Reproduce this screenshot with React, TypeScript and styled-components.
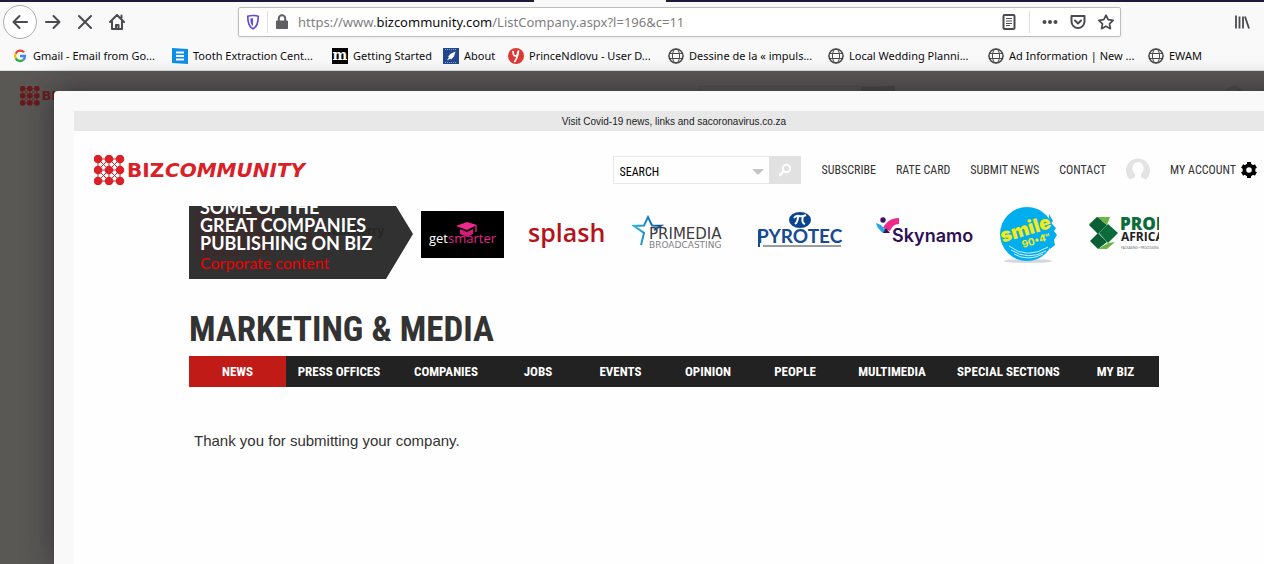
import React from "react";
import styled, { createGlobalStyle } from "styled-components";

const GlobalStyle = createGlobalStyle`
  *, *::before, *::after { box-sizing: border-box; }
  body { margin: 0; background: #595855; color: #333; }
  button { border: 0; padding: 0; background: none; font: inherit; color: inherit; cursor: pointer; }
  a { color: inherit; text-decoration: none; }
  svg { display: block; flex: none; }
`;

const uiFont = `"Noto Sans", "Open Sans", sans-serif`;
const condensed = `"Roboto Condensed", Roboto, sans-serif`;

const Screen = styled.div`
  display: flex;
  flex-direction: column;
  min-height: 100vh;
  overflow: hidden;
`;

/* Browser chrome */

const Chrome = styled.header`
  background: #f9f9fa;
  border-bottom: 1px solid #dcdcdc;
  font-family: ${uiFont};
`;

const TabStrip = styled.div`
  display: flex;
  height: 2px;
  background: #1c1b3c;
`;

const ActiveTab = styled.div`
  width: 132px;
  margin-left: 534px;
  background: #f9f9fa;
`;

const ToolBar = styled.div`
  display: flex;
  align-items: center;
  height: 40px;
  padding: 0 14px 0 3px;
`;

const ToolButton = styled.button<{ $round?: boolean }>`
  display: grid;
  place-items: center;
  flex: none;
  width: ${(p) => (p.$round ? 34 : 32)}px;
  height: ${(p) => (p.$round ? 34 : 32)}px;
  border-radius: 50%;
  border: ${(p) => (p.$round ? "1px solid #acacac" : "0")};
  background: ${(p) => (p.$round ? "#fff" : "none")};
`;

const AddressBar = styled.form`
  display: flex;
  align-items: center;
  flex: 1;
  height: 30px;
  margin: 0 113px 0 105px;
  padding: 0 6px;
  background: #fff;
  border: 1px solid #bdbdbd;
  border-radius: 2px;
  box-shadow: 0 1px 3px rgba(0, 0, 0, 0.06);
`;

const Divider = styled.span<{ $gap: number }>`
  width: 1px;
  height: 22px;
  margin: 0 ${(p) => p.$gap}px;
  background: #dedede;
`;

const Address = styled.a`
  flex: 1;
  margin-left: 8px;
  font-size: 13px;
  line-height: 20px;
  color: #808080;
  white-space: nowrap;
  b { font-weight: 400; color: #0c0c0d; }
`;

const AddressActions = styled.div`
  display: flex;
  align-items: center;
  gap: 12px;
`;

const Bookmarks = styled.nav`
  display: flex;
  align-items: center;
  height: 28px;
  padding-left: 12px;
`;

const Bookmark = styled.a<{ $width: number }>`
  display: flex;
  align-items: center;
  gap: 5px;
  flex: none;
  width: ${(p) => p.$width}px;
  font-size: 11px;
  line-height: 16px;
  color: #0c0c0d;
  white-space: nowrap;
`;

/* Dimmed page and the panel over it */

const Stage = styled.div`
  position: relative;
  display: flex;
  flex: 1;
  padding: 20px 0 0 54px;
  background: #595855;
`;

const DimmedHeader = styled.div`
  position: absolute;
  inset: 15px 20px auto 20px;
  display: flex;
  align-items: flex-start;
`;

const DimmedSearch = styled.div`
  width: 196px;
  height: 28px;
  margin: 0 329px 0 auto;
  border: 1px solid #504f4c;
  border-right: 34px solid #4b4a48;
`;

const DimmedAvatar = styled.div`
  width: 20px;
  height: 20px;
  border: 3px solid #504f4c;
  border-radius: 50%;
`;

const Panel = styled.section`
  position: relative;
  flex: 1;
  margin-right: -30px;
  padding: 20px 20px 0;
  background: #f9f9f9;
  border-radius: 4px 0 0 0;
  box-shadow: 0 0 30px rgba(30, 25, 35, 0.65);
`;

const Page = styled.div`
  min-height: 100%;
  background: #fefefe;
`;

const Notice = styled.a`
  display: block;
  height: 20px;
  background: #e8e8e8;
  text-align: center;
  font: 10px/21px "Liberation Sans", Arial, sans-serif;
  color: #222;
`;

const SiteHeader = styled.header`
  display: flex;
  align-items: center;
  gap: 20px;
  height: 75px;
  padding: 2px 17px 0 20px;
  font: 12px/20px ${condensed};
  color: #333;
`;

const LogoLink = styled.a`
  margin-right: auto;
`;

const SearchForm = styled.form`
  display: flex;
  height: 28px;
`;

const SearchBox = styled.label`
  display: flex;
  align-items: center;
  width: 156px;
  padding: 4px 5px 0;
  border: 1px solid #e8e8e8;
  border-right: 0;
`;

const SearchInput = styled.input`
  flex: 1;
  min-width: 0;
  padding: 0;
  border: 0;
  outline: 0;
  background: none;
  font: 12px/20px ${condensed};
  color: #000;
`;

const SearchButton = styled.button`
  display: grid;
  place-items: center;
  width: 32px;
  background: #e1e1e1;
`;

const Account = styled.a`
  display: flex;
  align-items: center;
  gap: 5px;
`;

const Container = styled.main`
  max-width: 970px;
  margin: 0 auto;
`;

const Companies = styled.section`
  display: flex;
  height: 73px;
  overflow: hidden;
`;

const CompaniesTitle = styled.div`
  position: relative;
  display: flex;
  flex-direction: column;
  justify-content: flex-end;
  flex: none;
  width: 224px;
  padding: 0 0 6px 11px;
  background: #313131;
  clip-path: polygon(0 0, 207px 0, 224px 28px, 197px 73px, 0 73px);
  font-family: Lato, sans-serif;
`;

const HiddenLogos = styled.svg`
  position: absolute;
  left: 0;
  top: 0;
`;

const BannerHeading = styled.h2`
  position: relative;
  margin: 0;
  font-size: 18px;
  line-height: 18px;
  font-weight: 700;
  color: #fff;
  white-space: nowrap;
`;

const BannerNote = styled.p`
  position: relative;
  margin: 0;
  font-size: 16px;
  line-height: 21px;
  color: #f00000;
`;

const LogoStrip = styled.div`
  display: flex;
  gap: 24px;
  flex: 1;
  min-width: 0;
  margin-left: 8px;
  overflow: hidden;
`;

const Heading = styled.h1`
  margin: 30px 0 5px;
  font: 700 35px/42px ${condensed};
  color: #333;
`;

const MainNav = styled.nav`
  display: grid;
  grid-template-columns: 97fr 106fr 108fr 76fr 89fr 86fr 88fr 106fr 127fr 87fr;
  background: #222;
`;

const MainNavLink = styled.a<{ $active?: boolean }>`
  background: ${(p) => (p.$active ? "#c01b17" : "none")};
  color: #fff;
  text-align: center;
  font: 700 13px/31px ${condensed};
  white-space: nowrap;
`;

const Message = styled.p`
  margin: 44px 5px;
  font: 15px/20px "Liberation Sans", Arial, sans-serif;
  color: #333;
`;

const ink = "#4a4a4f";

const Icon = ({ size = 16, children }: { size?: number; children: React.ReactNode }) => (
  <svg width={size} height={size} viewBox="0 0 16 16" fill="none" stroke={ink} strokeWidth="2" strokeLinecap="round" strokeLinejoin="round" aria-hidden="true">
    {children}
  </svg>
);

const Globe = () => (
  <svg width="16" height="16" viewBox="0 0 16 16" fill="none" stroke="#4a4a4a" aria-hidden="true">
    <circle cx="8" cy="8" r="7" strokeWidth="1.6" />
    <ellipse cx="8" cy="8" rx="3.6" ry="7" strokeWidth="1" />
    <path d="M1.5 5.500h13M1.5 10.500h13" strokeWidth="1" />
  </svg>
);

const GoogleMark = () => (
  <svg width="16" height="16" viewBox="0 0 16 16" fill="none" strokeWidth="2.3" aria-hidden="true">
    <path d="M12 4.2A5 5 0 0 0 3.7 5.6" stroke="#ea4335" />
    <path d="M3.7 5.6a5 5 0 0 0 0 4.8" stroke="#fbbc05" />
    <path d="M3.7 10.4a5 5 0 0 0 7.6 1.4" stroke="#34a853" />
    <path d="M11.3 11.8A5 5 0 0 0 13 8H8" stroke="#4285f4" />
  </svg>
);

const ListMark = () => (
  <svg width="16" height="16" viewBox="0 0 16 16" aria-hidden="true">
    <path d="M0 0l16 1v15L0 15z" fill="#0d8fe8" />
    <path d="M4 4.5h8M4 8h8M4 11.5h8" stroke="#fff" strokeWidth="2" />
  </svg>
);

const LetterM = () => (
  <svg width="16" height="16" viewBox="0 0 16 16" aria-hidden="true">
    <path d="M0 0h16v16H0z" />
    <text x="8" y="12" textAnchor="middle" fontFamily="DejaVu Serif, serif" fontWeight="700" fontSize="14" fill="#fff">m</text>
  </svg>
);

const RocketMark = () => (
  <svg width="16" height="16" viewBox="0 0 16 16" aria-hidden="true">
    <path d="M0 0h16v16H0z" fill="#23478c" />
    <path d="M12.500 3.500L8 5.500 5 8.500l1 .500-2 3.500 3.500-2 .500 1L11 8.500z" fill="#fff" />
    <path d="M2 1.500h12M2 14.500h12" stroke="#8aa2cf" strokeDasharray="1 1" />
  </svg>
);

const RedYMark = () => (
  <svg width="16" height="16" viewBox="0 0 16 16" aria-hidden="true">
    <circle cx="8" cy="8" r="8" fill="#dc3a35" />
    <path d="M5 3.500c.2 3 .8 4.500 2.200 4.500 1.700 0 2.600-2 3-4.700M10.500 3C10 7 9 10.500 6.800 13.500" fill="none" stroke="#fff" strokeWidth="1.700" strokeLinecap="round" />
  </svg>
);

const bookmarks: { label: string; width: number; icon: React.ReactNode }[] = [
  { label: "Gmail - Email from Go...", width: 160, icon: <GoogleMark /> },
  { label: "Tooth Extraction Cent...", width: 160, icon: <ListMark /> },
  { label: "Getting Started", width: 111, icon: <LetterM /> },
  { label: "About", width: 65, icon: <RocketMark /> },
  { label: "PrinceNdlovu - User D...", width: 160, icon: <RedYMark /> },
  { label: "Dessine de la « impuls...", width: 160, icon: <Globe /> },
  { label: "Local Wedding Planni...", width: 160, icon: <Globe /> },
  { label: "Ad Information | New ...", width: 160, icon: <Globe /> },
  { label: "EWAM", width: 64, icon: <Globe /> },
];

const navItems = ["NEWS", "PRESS OFFICES", "COMPANIES", "JOBS", "EVENTS", "OPINION", "PEOPLE", "MULTIMEDIA", "SPECIAL SECTIONS", "MY BIZ"];

const dots = [4, 15, 26];

const BizLogo = ({ color, scale = 1, short }: { color: string; scale?: number; short?: boolean }) => (
  <svg width={216 * scale} height={30 * scale} viewBox="0 0 216 30" fill={color} role="img" aria-label="Bizcommunity">
    <path d="M4 4h22v22H4zM4 15h22M15 4v22M4 4l22 22M26 4L4 26M15 4L4 15l11 11 11-11z" fill="none" stroke={color} />
    {dots.map((y) => dots.map((x) => <circle key={`${x}-${y}`} cx={x} cy={y} r="4.300" />))}
    <text x="33" y="22" fontFamily="DejaVu Sans, sans-serif" fontSize="20" fontWeight="700">{short ? "BI" : "BIZ"}</text>
    {!short && (
      <text x="71" y="22" fontFamily="DejaVu Sans, sans-serif" fontSize="20" fontStyle="italic" fontWeight="700">COMMUNITY</text>
    )}
  </svg>
);

const GetSmarter = () => (
  <svg width="83" height="73" role="img" aria-label="getsmarter">
    <path d="M0 5h83v47H0z" />
    <path d="M35 20l11-4 10 3-10 5z" fill="#f0288c" />
    <path d="M39 23l7 3 6-3v5l-6 3-7-3z" fill="#d41b79" />
    <path d="M55 19v7" stroke="#d41b79" strokeWidth="1.500" />
    <text x="8" y="37" fontFamily="Open Sans, sans-serif" fontWeight="400" fontSize="13" fill="#fff">get<tspan fill="#e5258a">smarter</tspan></text>
  </svg>
);

const Splash = () => (
  <svg width="80" height="73" role="img" aria-label="splash">
    <text x="0" y="36" fontFamily="Open Sans, sans-serif" fontWeight="600" fontSize="25" fill="#b5121b">splash</text>
  </svg>
);

const Primedia = () => (
  <svg width="96" height="73" role="img" aria-label="Primedia Broadcasting">
    <defs>
      <linearGradient id="star" x1="0" x2="1">
        <stop offset="0" stopColor="#26b5e8" />
        <stop offset="1" stopColor="#12508e" />
      </linearGradient>
    </defs>
    <path d="M9 39l3-12-10-7 10-.500L16 11l4 8.500 9 .200-7 4.500" fill="none" stroke="url(#star)" strokeWidth="2" />
    <text x="17" y="33" fontFamily="DejaVu Sans, sans-serif" fontSize="15" fill="#3c3c40">PRIMEDIA</text>
    <text x="17" y="42" fontFamily="DejaVu Sans, sans-serif" fontSize="9" fill="#808085">BROADCASTING</text>
  </svg>
);

const Pyrotec = () => (
  <svg width="96" height="73" role="img" aria-label="Pyrotec">
    <ellipse cx="48" cy="14" rx="11" ry="8" fill="#0b4590" />
    <path d="M42 12q2-3 5-2t7-1M46 10q0 6-3 8M51 10q-2 7 2 8" fill="none" stroke="#fff" strokeWidth="2" />
    <text x="5" y="37" fontFamily="Lato, sans-serif" fontWeight="700" fontSize="19" fill="#164a93">PYROTEC</text>
    <path d="M7 24v17" stroke="#164a93" strokeWidth="2" />
    <path d="M11 40h78" stroke="#9b9ca0" strokeWidth="2" />
  </svg>
);

const Skynamo = () => (
  <svg width="104" height="73" role="img" aria-label="Skynamo">
    <path d="M11 22c3-6 8-10 16-10v6c-5 0-7 3-9 7z" fill="#f0288c" />
    <path d="M4 17c4 1 7 3 8 6l2-2 1 5-4 1c-3-3-6-5-7-10z" fill="#26a9e0" />
    <circle cx="11" cy="14" r="2.700" fill="#3a1060" />
    <path d="M11 27l3-5 4 5z" fill="#3a1060" />
    <text x="20" y="36" fontFamily="Inter, sans-serif" fontWeight="600" fontSize="18" fill="#2f0e56">Skynamo</text>
  </svg>
);

const Smile = () => (
  <svg width="60" height="73" role="img" aria-label="smile 90.4 FM">
    <ellipse cx="28" cy="55" rx="24" ry="2" fill="#d5d5df" />
    <circle cx="27" cy="28" r="27" fill="#00aeef" />
    <path d="M49 8l4 7-2 2 5 5-2 3 3 4-3 5 1 5-5 4z" fill="#00aeef" />
    <path d="M9 40q18 14 39 1M11 44q17 11 35 1M14 48q14 8 29 0" fill="none" stroke="#d2f0fc" />
    <g transform="rotate(-17 28 28)">
      <text x="1" y="29" fontFamily="Inter, sans-serif" fontWeight="900" fontSize="19" fill="#f5ea14">smile</text>
      <text x="19" y="40" fontFamily="Inter, sans-serif" fontWeight="700" fontSize="10" fill="#f5ea14">90•4</text>
      <text x="42" y="36" fontFamily="Inter, sans-serif" fontWeight="700" fontSize="4" fill="#f5ea14">FM</text>
    </g>
  </svg>
);

const Propak = () => (
  <svg width="110" height="73" role="img" aria-label="Propak Africa">
    <path d="M5 18l8-7h9l-9 10z" fill="#6cb544" />
    <path d="M13 11l10 8-9 9-9-9z" fill="#0a5e36" />
    <path d="M24 18l10 9-10 10-9-10z" fill="#0a6b3b" />
    <path d="M14 27l9 9-9 7-8-8z" fill="#0a5e36" />
    <path d="M22 11h4l-3 8-5-4zM24 37l-10 6h9l8-7z" fill="#6cb544" />
    <text x="36" y="24" fontFamily="Open Sans, sans-serif" fontWeight="800" fontSize="17" fill="#0a6b3b">PROPAK</text>
    <text x="37" y="35" fontFamily="Open Sans, sans-serif" fontWeight="700" fontSize="12" fill="#222">AFRICA</text>
    <text x="37" y="43" fontFamily="Open Sans, sans-serif" fontSize="3" fill="#555">PACKAGING • PROCESSING</text>
  </svg>
);

export default function App() {
  return (
    <Screen>
      <GlobalStyle />
      <Chrome>
        <TabStrip><ActiveTab /></TabStrip>
        <ToolBar>
          <ToolButton $round aria-label="Back"><Icon><path d="M15 8H1.500M7.500 2L1.500 8l6 6" /></Icon></ToolButton>
          <ToolButton aria-label="Forward"><Icon><path d="M1 8h13.500M8.500 2l6 6-6 6" /></Icon></ToolButton>
          <ToolButton aria-label="Stop"><Icon><path d="M2 2l12 12M14 2L2 14" /></Icon></ToolButton>
          <ToolButton aria-label="Home"><Icon><path d="M1 8l7-7 7 7M3 7.500V15h10V7.500M12.500 1.500V4" /><path d="M7 15v-4h2.500v4" /></Icon></ToolButton>
          <AddressBar>
            <svg width="16" height="16" viewBox="0 0 16 16" fill="none" aria-hidden="true">
              <path d="M8 1.500c2 0 3.800.300 5.200.8C13.300 8 12.500 12.500 8 14.800 3.500 12.500 2.700 8 2.800 2.300 4.200 1.800 6 1.500 8 1.500z" stroke="#6549dc" strokeWidth="1.700" />
              <path d="M8 4.200v8C5.800 10.500 5.300 8 5.400 4.500z" fill="#5a50e0" />
            </svg>
            <Divider $gap={6} />
            <svg width="16" height="16" viewBox="0 0 16 16" aria-hidden="true">
              <path d="M2.500 7h11v7.500h-11z" fill="#5f5f63" stroke="#5f5f63" strokeLinejoin="round" />
              <path d="M4.800 7V4.500a3.200 3.200 0 0 1 6.400 0V7" fill="none" stroke="#5f5f63" strokeWidth="2" />
            </svg>
            <Address href="#">https://www.<b>bizcommunity.com</b>/ListCompany.aspx?l=196&amp;c=11</Address>
            <AddressActions>
              <button type="button" aria-label="Reader view">
                <Icon><rect x="2.500" y="1" width="11" height="14" rx="1" /><path d="M5.500 4.500h5M5.500 7h5M5.500 9.500h5M5.500 11.500h3" strokeWidth="1" /></Icon>
              </button>
              <Divider $gap={0} />
              <button type="button" aria-label="Page actions">
                <svg width="16" height="16" fill={ink}><circle cx="2.500" cy="8" r="2" /><circle cx="8" cy="8" r="2" /><circle cx="13.500" cy="8" r="2" /></svg>
              </button>
              <button type="button" aria-label="Save to Pocket">
                <Icon><path d="M1.500 2h13v5.500a6.500 6.500 0 0 1-13 0z" /><path d="M5 6.500l3 3 3-3" /></Icon>
              </button>
              <button type="button" aria-label="Bookmark">
                <Icon><path d="M8 1.200l2.200 4.500 4.900.700-3.600 3.400.900 4.900L8 12.300l-4.400 2.400.900-4.900L.900 6.400l4.900-.700z" strokeWidth="1.700" /></Icon>
              </button>
            </AddressActions>
          </AddressBar>
          <button type="button" aria-label="Library">
            <svg width="16" height="16" stroke={ink} strokeWidth="1.800" fill="none"><path d="M2 1.500v13M5.500 2.500v12M9 2.500v12M11 2.500l4 12" /></svg>
          </button>
        </ToolBar>
        <Bookmarks>
          {bookmarks.map((b) => (
            <Bookmark key={b.label} href="#" $width={b.width}>{b.icon}{b.label}</Bookmark>
          ))}
        </Bookmarks>
      </Chrome>
      <Stage>
        <DimmedHeader>
          <BizLogo color="#6b1a1c" scale={0.65} short />
          <DimmedSearch />
          <DimmedAvatar />
        </DimmedHeader>
        <Panel>
          <Page>
            <Notice href="#">Visit Covid-19 news, links and sacoronavirus.co.za</Notice>
            <SiteHeader>
              <LogoLink href="#"><BizLogo color="#da2128" /></LogoLink>
              <SearchForm>
                <SearchBox>
                  <SearchInput aria-label="Search" defaultValue="SEARCH" />
                  <svg width="12" height="6" aria-hidden="true"><path d="M0 0h12L6 6z" fill="#c4c4c4" /></svg>
                </SearchBox>
                <SearchButton type="button" aria-label="Search">
                  <svg width="14" height="14" fill="none" stroke="#fff" strokeWidth="2" strokeLinecap="round"><circle cx="8.500" cy="5.500" r="3.700" /><path d="M5.500 8.500L2 12" strokeWidth="2.500" /></svg>
                </SearchButton>
              </SearchForm>
              <a href="#">SUBSCRIBE</a>
              <a href="#">RATE CARD</a>
              <a href="#">SUBMIT NEWS</a>
              <a href="#">CONTACT</a>
              <svg width="24" height="24" aria-hidden="true">
                <path d="M4 21.500A12 12 0 1 1 20 21.500L15 19v-3c5-5 2-12-3-12S4 11 9 16v3z" fill="#e3e3e3" />
              </svg>
              <Account href="#">
                MY ACCOUNT
                <svg width="16" height="16" viewBox="0 0 16 16" aria-hidden="true">
                  <circle cx="8" cy="8" r="4.600" fill="none" stroke="#000" strokeWidth="3.600" />
                  <path d="M6 0h4v3H6zM6 13h4v3H6zM.100 5.700l2-3.500 2.600 1.500-2 3.500zM11.300 12.300l2-3.500 2.600 1.500-2 3.500zM2.100 13.800l-2-3.500 2.600-1.500 2 3.500zM13.300 7.200l-2-3.500 2.600-1.500 2 3.500z" />
                </svg>
              </Account>
            </SiteHeader>
            <Container>
              <Companies>
                <CompaniesTitle>
                  <HiddenLogos width="224" height="73" aria-hidden="true">
                    <path d="M6 4h45v47H6zM51 4h32v46H67l-7-8-8 8z" fill="#3a2b2d" />
                    <circle cx="127" cy="25" r="9" fill="none" stroke="#432526" strokeWidth="3" />
                    <text x="138" y="29" fontFamily="Open Sans, sans-serif" fontWeight="600" fontSize="12" fill="#242424">redcherry</text>
                  </HiddenLogos>
                  <BannerHeading>SOME OF THE<br />GREAT COMPANIES<br />PUBLISHING ON BIZ</BannerHeading>
                  <BannerNote>Corporate content</BannerNote>
                </CompaniesTitle>
                <LogoStrip>
                  <GetSmarter />
                  <Splash />
                  <Primedia />
                  <Pyrotec />
                  <Skynamo />
                  <Smile />
                  <Propak />
                </LogoStrip>
              </Companies>
              <Heading>MARKETING &amp; MEDIA</Heading>
              <MainNav>
                {navItems.map((item, i) => (
                  <MainNavLink key={item} href="#" $active={i === 0}>{item}</MainNavLink>
                ))}
              </MainNav>
              <Message>Thank you for submitting your company.</Message>
            </Container>
          </Page>
        </Panel>
      </Stage>
    </Screen>
  );
}
